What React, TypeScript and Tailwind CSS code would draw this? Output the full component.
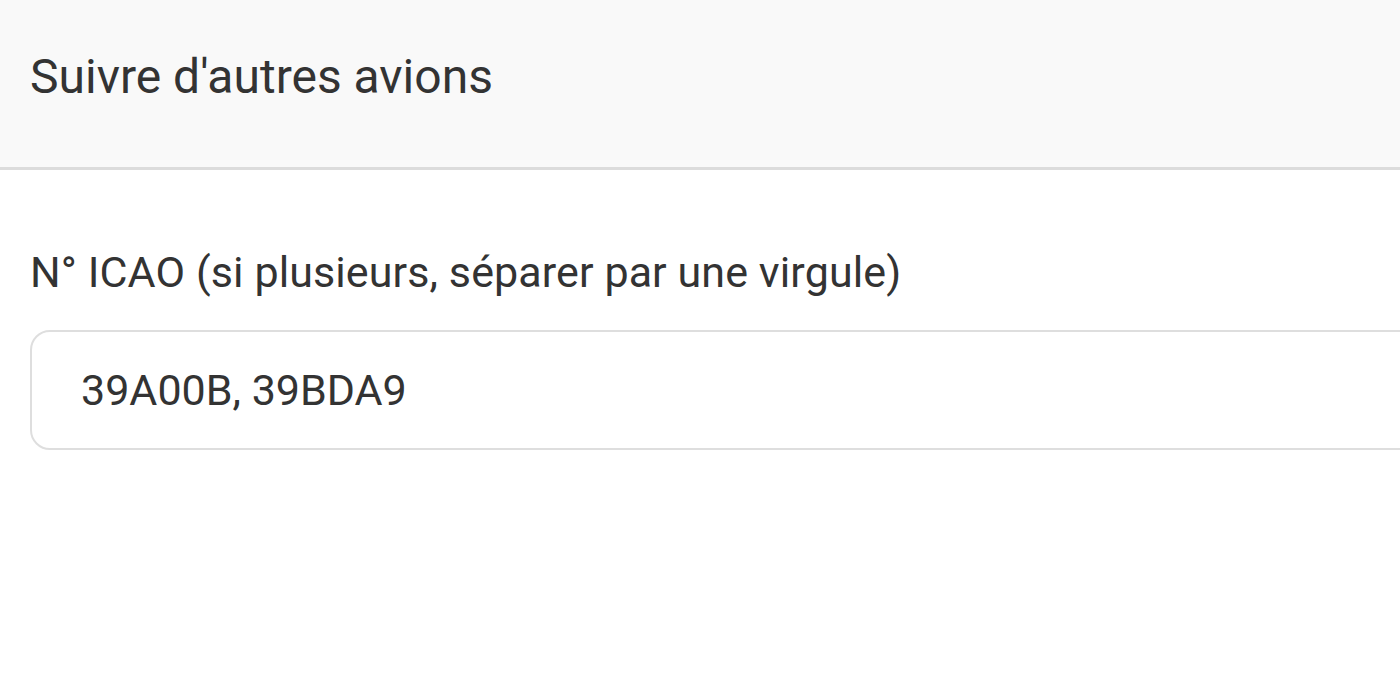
export default function App() {
  return (
    <div className="h-[700px] w-full overflow-hidden bg-white text-[#333]" style={{ fontFamily: "Roboto, sans-serif" }}>
      {/* Header */}
      <div className="flex h-[170px] items-center border-b-[3px] border-[#dcdcdc] bg-[#f9f9f9] px-[30px]">
        <h1 className="text-[48px] leading-none font-normal pb-[14px]">Suivre d'autres avions</h1>
      </div>

      {/* Form */}
      <div className="pt-[78px] pl-[30px]">
        <label className="block text-[43px] leading-[48px] tracking-[0.1px]">N° ICAO (si plusieurs, séparer par une virgule)</label>
        <div className="mt-[34px] flex h-[120px] w-[1420px] items-center rounded-[20px] border-2 border-[#dedede] px-[49px] text-[43px]">
          39A00B, 39BDA9
        </div>
      </div>
    </div>
  );
}
